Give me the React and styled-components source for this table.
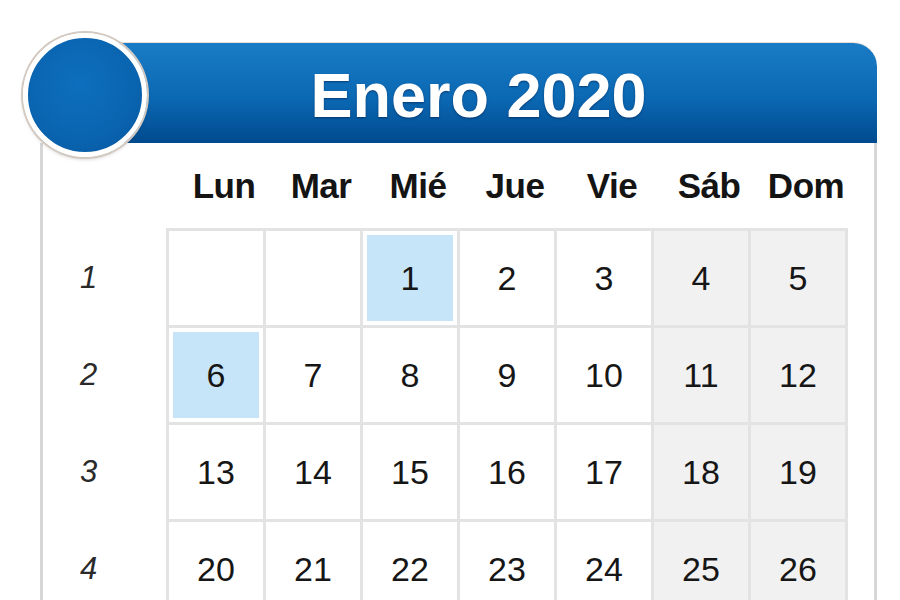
import styled, { createGlobalStyle } from 'styled-components';

const GlobalStyle = createGlobalStyle`
    html, body {
        margin: 0;
        padding: 0;
        background: #ffffff;
        overflow: hidden;
        font-family: "Liberation Sans", Arial, sans-serif;
    }
`;

const Page = styled.div`
    width: 900px;
    height: 600px;
    padding: 42px 0 0 40px;
    box-sizing: border-box;
    overflow: hidden;
`;

// Tarjeta del calendario
const Card = styled.div`
    position: relative;
    width: 837px;
`;

const Header = styled.header`
    height: 101px;
    margin-left: 11px;
    padding: 4px 0 0 29px;
    box-sizing: border-box;
    border-top: 1px solid #eadfd4;
    border-top-right-radius: 24px;
    background: linear-gradient(to bottom, #1a7cc6 0%, #0b68b3 55%, #004a8e 100%);
    display: flex;
    align-items: center;
    justify-content: center;
    color: #ffffff;
    font-size: 63px;
    font-weight: 700;
    text-shadow: 0 1px 2px rgba(0, 30, 70, 0.6);
`;

const Badge = styled.div`
    position: absolute;
    left: -17px;
    top: -9px;
    width: 114px;
    height: 114px;
    border-radius: 50%;
    border: 5px solid #ffffff;
    background: radial-gradient(circle at 45% 40%, #0d6fbd 0%, #0a64b0 60%, #06549a 100%);
    box-shadow: 0 0 0 2px #d2c9c0, 0 2px 4px rgba(0, 0, 0, 0.2);
`;

const Body = styled.div`
    display: grid;
    grid-template-columns: 123px 682px;
    border-left: 3px solid #d6d6d6;
    border-right: 3px solid #d6d6d6;
    background: #ffffff;
`;

const DayHeads = styled.div`
    grid-column: 2;
    display: grid;
    grid-template-columns: repeat(7, 94px);
    column-gap: 3px;
    padding: 0 3px;
    height: 85px;
    align-items: center;
`;

const DayHead = styled.div`
    padding-left: 16px;
    text-align: center;
    font-size: 35px;
    font-weight: 700;
    color: #141414;
    letter-spacing: -0.5px;
`;

const WeekCol = styled.div`
    display: grid;
    grid-template-rows: repeat(4, 94px);
    row-gap: 3px;
    padding-top: 3px;
`;

const WeekNum = styled.div`
    display: flex;
    align-items: center;
    justify-content: center;
    padding-right: 32px;
    font-size: 31px;
    font-style: italic;
    color: #2a2a2a;
`;

const Grid = styled.div`
    display: grid;
    grid-template-columns: repeat(7, 94px);
    grid-auto-rows: 94px;
    gap: 3px;
    padding: 3px;
    background: #e3e3e3;
`;

const Cell = styled.div`
    display: flex;
    align-items: center;
    justify-content: center;
    font-size: 34px;
    color: #161616;
    background: ${p => (p.weekend ? '#f1f1f1' : '#ffffff')};
    ${p => p.today && `
        background: #c6e5f8;
        box-shadow: inset 0 0 0 4px #ffffff;
    `}
`;

const dias = ['Lun', 'Mar', 'Mié', 'Jue', 'Vie', 'Sáb', 'Dom'];

const semanas = [
    [null, null, 1, 2, 3, 4, 5],
    [6, 7, 8, 9, 10, 11, 12],
    [13, 14, 15, 16, 17, 18, 19],
    [20, 21, 22, 23, 24, 25, 26],
];

const marcados = [1, 6];

function App() {
    return (
        <Page>
            <GlobalStyle />
            <Card>
                <Header>Enero 2020</Header>
                <Badge />
                <Body>
                    <DayHeads>
                        {dias.map(d => <DayHead key={d}>{d}</DayHead>)}
                    </DayHeads>
                    <WeekCol>
                        {semanas.map((_, i) => <WeekNum key={i}>{i + 1}</WeekNum>)}
                    </WeekCol>
                    <Grid>
                        {semanas.map((sem, i) =>
                            sem.map((n, j) => (
                                <Cell
                                    key={`${i}-${j}`}
                                    weekend={j >= 5}
                                    today={marcados.includes(n)}
                                >
                                    {n}
                                </Cell>
                            ))
                        )}
                    </Grid>
                </Body>
            </Card>
        </Page>
    );
}

export default App;
